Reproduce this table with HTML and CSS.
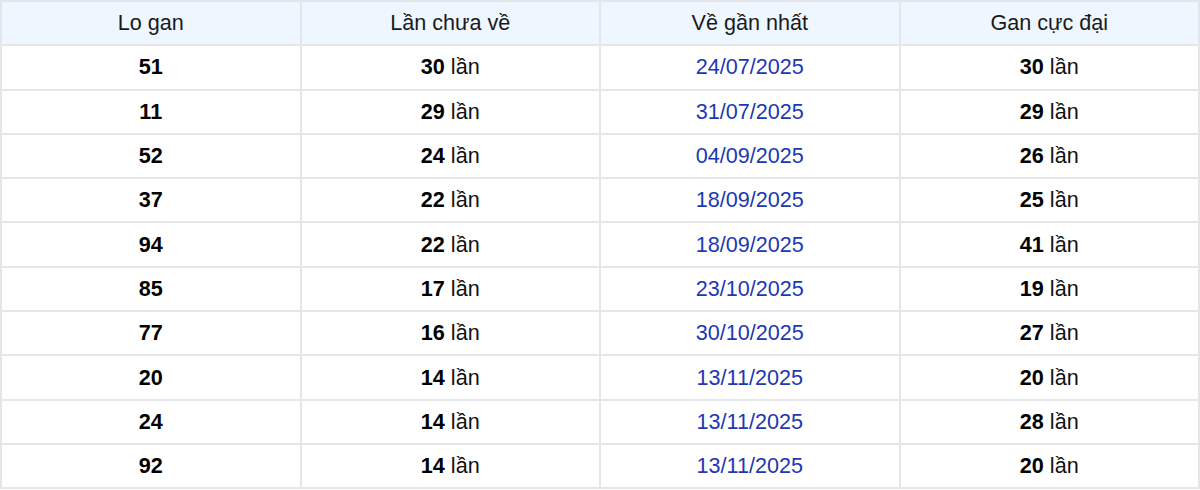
FILE: index.html
```html
<!DOCTYPE html>
<html lang="vi">
<head>
<meta charset="utf-8">
<link rel="stylesheet" href="styles.css">
</head>
<body>
<table class="gan">
<thead>
<tr><th>Lo gan</th><th>Lần chưa về</th><th>Về gần nhất</th><th>Gan cực đại</th></tr>
</thead>
<tbody>
<tr><td><b>51</b></td><td><b>30</b> lần</td><td class="date">24/07/2025</td><td><b>30</b> lần</td></tr>
<tr><td><b>11</b></td><td><b>29</b> lần</td><td class="date">31/07/2025</td><td><b>29</b> lần</td></tr>
<tr><td><b>52</b></td><td><b>24</b> lần</td><td class="date">04/09/2025</td><td><b>26</b> lần</td></tr>
<tr><td><b>37</b></td><td><b>22</b> lần</td><td class="date">18/09/2025</td><td><b>25</b> lần</td></tr>
<tr><td><b>94</b></td><td><b>22</b> lần</td><td class="date">18/09/2025</td><td><b>41</b> lần</td></tr>
<tr><td><b>85</b></td><td><b>17</b> lần</td><td class="date">23/10/2025</td><td><b>19</b> lần</td></tr>
<tr><td><b>77</b></td><td><b>16</b> lần</td><td class="date">30/10/2025</td><td><b>27</b> lần</td></tr>
<tr><td><b>20</b></td><td><b>14</b> lần</td><td class="date">13/11/2025</td><td><b>20</b> lần</td></tr>
<tr><td><b>24</b></td><td><b>14</b> lần</td><td class="date">13/11/2025</td><td><b>28</b> lần</td></tr>
<tr><td><b>92</b></td><td><b>14</b> lần</td><td class="date">13/11/2025</td><td><b>20</b> lần</td></tr>
</tbody>
</table>
</body>
</html>
```
FILE: styles.css
```css
html, body {
  margin: 0;
  padding: 0;
  background: #ffffff;
}
body {
  font-family: "Liberation Sans", Arial, sans-serif;
  font-size: 21.6px;
  color: #111;
}
.gan {
  width: 1200px;
  border-collapse: collapse;
  table-layout: fixed;
}
.gan th,
.gan td {
  border: 2px solid #e4e6ea;
  text-align: center;
  vertical-align: middle;
  padding: 0;
  height: 42.3px;
}
.gan th {
  background: #eef6ff;
  font-weight: normal;
  color: #1a1a1a;
}
.gan td b {
  font-weight: bold;
  color: #000;
}
.gan td.date {
  color: #1c38b4;
}
```
